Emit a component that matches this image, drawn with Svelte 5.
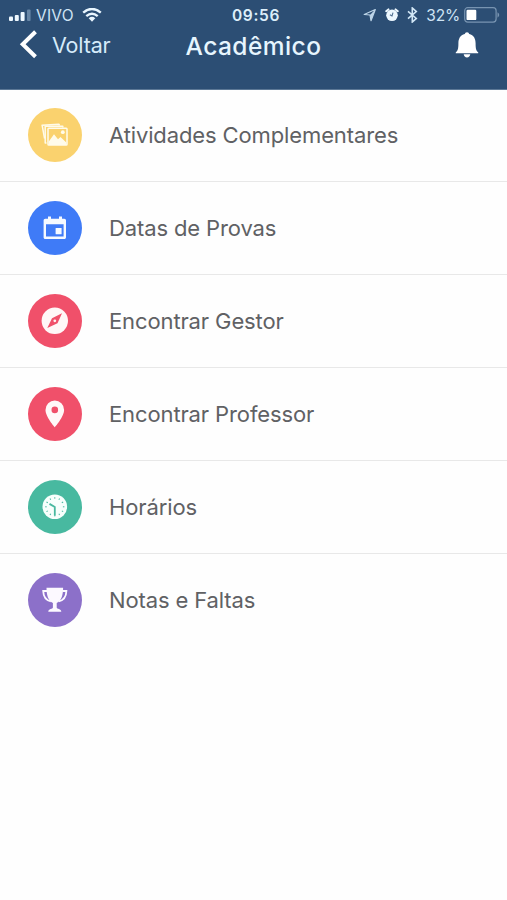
<script>
  const items = [
    { label: 'Atividades Complementares', icon: 'gallery', color: '#fad26e' },
    { label: 'Datas de Provas', icon: 'calendar', color: '#3f7bf7' },
    { label: 'Encontrar Gestor', icon: 'compass', color: '#f0506a' },
    { label: 'Encontrar Professor', icon: 'pin', color: '#f0506a' },
    { label: 'Horários', icon: 'clock', color: '#48b9a0' },
    { label: 'Notas e Faltas', icon: 'trophy', color: '#8c70c9' }
  ];
  const ticks = Array.from({ length: 12 }, (_, i) => i * 30);
</script>

<div class="screen">
  <header>
    <div class="status">
      <div class="side left">
        <svg class="signal" width="24" height="14" viewBox="0 0 24 14">
          <g fill="#eef8ff">
            <rect x="0" y="8.5" width="4" height="4.5" rx="1" />
            <rect x="5.8" y="7" width="4" height="6" rx="1" />
            <rect x="11.6" y="4" width="4" height="9" rx="1" />
          </g>
          <rect x="18" y="1.5" width="3.6" height="11.5" rx="1" fill="#6685a5" />
        </svg>
        <span class="carrier">VIVO</span>
        <svg class="wifi" width="20" height="15" viewBox="0 0 20 15">
          <g fill="none" stroke="#e9f6ff" stroke-width="2.4">
            <path d="M1.2 4.7Q10-2.8 18.8 4.7" />
            <path d="M4.3 8.1Q10 3.2 15.7 8.1" />
          </g>
          <path d="M6.7 10.2Q10 7.3 13.3 10.2L10 13.7z" fill="#e9f6ff" />
        </svg>
      </div>
      <span class="time">09:56</span>
      <div class="side right">
        <svg width="14" height="14" viewBox="0 0 14 14">
          <path d="M1.2 6.5 12.3 1.5 8 12.7 7 7z" fill="none" stroke="#bdd5e8" stroke-width="1.2" stroke-linejoin="round" />
          <path d="M7 7 12.3 1.5 8 12.7z" fill="#bdd5e8" />
        </svg>
        <svg class="alarm" width="14" height="14" viewBox="0 0 14 14">
          <circle cx="7" cy="7.3" r="5.8" fill="#edf8ff" />
          <path d="M1.2 3.2 3.4 1.4M12.8 3.2 10.6 1.4" stroke="#edf8ff" stroke-width="2" stroke-linecap="round" />
          <path d="M8 4.6 7 7.9 4.9 6.7" fill="none" stroke="#4f6f91" stroke-width="1.1" />
        </svg>
        <svg class="bluetooth" width="11" height="16" viewBox="0 0 11 16">
          <path d="M1 4.4 9.3 11.4 5.3 15V1L9.3 4.6 1 11.6" fill="none" stroke="#d2e7f6" stroke-width="1.6" />
        </svg>
        <span class="percent">32%</span>
        <svg class="battery" width="36" height="16" viewBox="0 0 36 16">
          <rect x=".7" y=".7" width="31.4" height="14.4" rx="3" fill="none" stroke="#7894b1" stroke-width="1.2" />
          <rect x="2.5" y="2.7" width="9.8" height="10.4" rx="1.2" fill="#fff" />
          <path d="M33.5 5.3Q37 8 33.5 10.7z" fill="#7894b1" />
        </svg>
      </div>
    </div>
    <nav>
      <button class="back">
        <svg width="20" height="30" viewBox="0 0 20 30">
          <path d="M16.5 1.7 3.7 14.2 16.5 26.7" fill="none" stroke="#fff" stroke-width="4" />
        </svg>
        <span>Voltar</span>
      </button>
      <h1>Acadêmico</h1>
      <button class="bell" aria-label="Notificações">
        <svg width="24" height="28" viewBox="0 0 24 28">
          <path d="M12 1.2c1.3 0 2 .8 2.2 1.9 4.7 1.1 6.4 4.8 6.4 9.2 0 5.7.6 7.5 2.6 9v1H.8v-1c2-1.5 2.6-3.3 2.6-9 0-4.4 1.7-8.1 6.4-9.2C10 2 10.7 1.2 12 1.2zM8.7 23.3h6.6c-.2 2-1.5 3.2-3.3 3.2s-3.1-1.2-3.3-3.2z" fill="#fff" />
        </svg>
      </button>
    </nav>
  </header>

  <ul>
    {#each items as item}
      <li>
        <svg class="badge" viewBox="0 0 54 54" style:color={item.color}>
          <circle cx="27" cy="27" r="27" fill="currentColor" />
          {#if item.icon === 'gallery'}
            <g fill="none" stroke="#fffbea" stroke-width="1.5" stroke-linejoin="round">
              <path d="M16.6 30.5 14.1 17.2 31 16.2 31.5 17.5" />
              <path d="M18.5 35H17.2V18.3H34.8v1.2" />
              <rect x="20" y="20.2" width="19" height="16.8" rx=".8" fill="currentColor" />
            </g>
            <path d="M20.8 33.4 26 26.2l4 5.1 2.5-2.4 5.8 5.5V37H20.8z" fill="#fffbea" />
            <circle cx="34.8" cy="24.2" r="1.9" fill="#fffbea" />
          {:else if item.icon === 'calendar'}
            <path fill-rule="evenodd" fill="#f5f9ff" d="M17.3 17.8H20v-2.3h3v2.3h8v-2.3h3v2.3h2.3c1 0 1.7.8 1.7 1.8v16.6c0 1-.7 1.8-1.7 1.8h-19c-1 0-1.7-.8-1.7-1.8V19.6c0-1 .7-1.8 1.7-1.8zM18 23.2v12.4h17.6V23.2z" />
            <rect x="27.6" y="27" width="6" height="6.2" rx=".5" fill="#f5f9ff" />
          {:else if item.icon === 'compass'}
            <circle cx="26.8" cy="26.8" r="13.2" fill="#fff7f7" />
            <path d="M34 19.2 29.5 29.3 19.3 34.1 24 24.2z" fill="currentColor" />
            <circle cx="26.8" cy="26.8" r="1.4" fill="#fff0f0" />
          {:else if item.icon === 'pin'}
            <path fill-rule="evenodd" fill="#fff8f8" d="M26.8 13.6a9.3 9.3 0 0 1 9.3 9.3c0 6.8-9.3 17.3-9.3 17.3s-9.3-10.5-9.3-17.3a9.3 9.3 0 0 1 9.3-9.3zm0 6a3.3 3.3 0 1 0 0 6.6 3.3 3.3 0 0 0 0-6.6z" />
          {:else if item.icon === 'clock'}
            <circle cx="26.8" cy="26.8" r="12.3" fill="#f7fffc" />
            {#each ticks as angle}
              <path d="M26.8 17.2v1.5" stroke="currentColor" stroke-width="1" transform="rotate({angle} 26.8 26.8)" />
            {/each}
            <path d="M26.8 35.6V27L21.5 23.9" fill="none" stroke="currentColor" stroke-width="1.8" />
          {:else}
            <path d="M19 18h-3.8c.2 6.1 2.9 9.3 7.7 10.4M34.6 18h3.8c-.2 6.1-2.9 9.3-7.7 10.4" fill="none" stroke="#fcf9ff" stroke-width="1.8" />
            <path fill="#fcf9ff" d="M18.5 14.8h16.6c0 7.4-1.5 12.5-6.4 15.3v4.3c0 1.6 4.6 1.2 4.6 4.4H20.3c0-3.2 4.6-2.8 4.6-4.4v-4.3c-4.9-2.8-6.4-7.9-6.4-15.3z" />
          {/if}
        </svg>
        <span class="label">{item.label}</span>
      </li>
    {/each}
  </ul>
</div>

<style>
  :global(body) { background: #fff; }
  .screen {
    width: 507px;
    height: 900px;
    overflow: hidden;
    background: #fefefe;
    font-family: Inter, 'Liberation Sans', sans-serif;
  }
  header {
    box-sizing: border-box;
    height: 90px;
    background: #2c4e74;
    border-bottom: 1px solid #5c7896;
  }
  .status {
    display: grid;
    grid-template-columns: 1fr auto 1fr;
    align-items: center;
    height: 30px;
    padding: 0 7px 0 9px;
    color: #cfe4f5;
  }
  .side { display: flex; align-items: center; }
  .right { justify-content: flex-end; }
  .carrier { margin-left: 3px; font-size: 15.5px; letter-spacing: .2px; }
  .wifi { margin-left: 8px; }
  .time { margin-left: 3px; font-size: 15.5px; font-weight: 600; letter-spacing: .7px; color: #dceefa; }
  .alarm { margin-left: 8px; }
  .bluetooth { margin-left: 8px; }
  .percent { margin-left: 8px; font-size: 15.5px; letter-spacing: -.2px; }
  .battery { margin-left: 4px; }
  nav {
    display: grid;
    grid-template-columns: 1fr auto 1fr;
    align-items: start;
    height: 30px;
    padding: 0 28px 0 19px;
  }
  button { display: flex; align-items: center; height: 30px; padding: 0; border: 0; background: none; font: inherit; }
  .back { gap: 13px; justify-self: start; font-size: 21.5px; letter-spacing: -.15px; color: #d6ebfa; }
  h1 { margin: 1px 0 0 9px; font-size: 24.5px; line-height: 30px; font-weight: 500; letter-spacing: .45px; color: #e7f5fe; }
  .bell { justify-self: end; }
  ul { margin: 0; padding: 0; list-style: none; }
  li {
    box-sizing: border-box;
    display: flex;
    align-items: center;
    gap: 27px;
    height: 93px;
    padding-left: 28px;
    border-bottom: 1px solid #e8e8e8;
  }
  li:first-child { height: 92px; padding-bottom: 1px; }
  li:last-child { border-bottom-color: transparent; }
  .badge { width: 54px; height: 54px; flex: none; }
  .label { font-size: 22px; line-height: 30px; letter-spacing: -.12px; color: #606164; white-space: nowrap; }
</style>
